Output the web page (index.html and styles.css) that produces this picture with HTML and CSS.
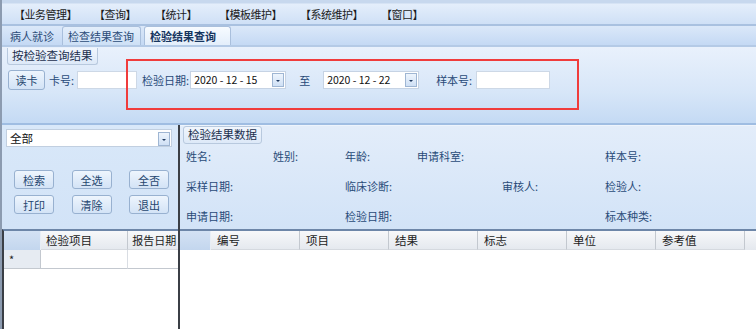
FILE: index.html
```html
<!DOCTYPE html>
<html>
  <head>
    <meta charset="utf-8" />
    <title>检验结果查询</title>
    <link rel="stylesheet" href="styles.css">
  </head>
  <body>
    <div class="window">
      <div class="menubar">
        <span class="menu m1">【业务管理】</span>
        <span class="menu m2">【查询】</span>
        <span class="menu m3">【统计】</span>
        <span class="menu m4">【模板维护】</span>
        <span class="menu m5">【系统维护】</span>
        <span class="menu m6">【窗口】</span>
      </div>

      <div class="tabbar">
        <span class="tab t1">病人就诊</span>
        <span class="tab t2">检查结果查询</span>
        <span class="tab active">检验结果查询</span>
      </div>

      <div class="search">
        <div class="group-title">按检验查询结果</div>
        <div class="search-row">
          <button class="btn btn-read">读卡</button>
          <span class="lbl lbl-card">卡号:</span>
          <span class="input in-card"></span>
          <span class="lbl lbl-date">检验日期:</span>
          <span class="date">2020 - 12 - 15<i class="drop"></i></span>
          <span class="lbl lbl-to">至</span>
          <span class="date">2020 - 12 - 22<i class="drop"></i></span>
          <span class="lbl lbl-sample">样本号:</span>
          <span class="input in-sample"></span>
        </div>
        <div class="mark"></div>
      </div>

      <div class="lower">
        <div class="left">
          <div class="left-tools">
            <div class="combo">全部<i class="drop"></i></div>
            <div class="btn-grid">
              <button class="btn">检索</button>
              <button class="btn">全选</button>
              <button class="btn">全否</button>
              <button class="btn">打印</button>
              <button class="btn">清除</button>
              <button class="btn">退出</button>
            </div>
          </div>
          <div class="grid grid-left">
            <div class="grid-head">
              <span class="rowhead"></span>
              <span class="col c-item">检验项目</span>
              <span class="col c-date">报告日期</span>
            </div>
            <div class="grid-row">
              <span class="rowhead star">*</span>
              <span class="cell c-item"></span>
              <span class="cell c-date"></span>
            </div>
          </div>
        </div>

        <div class="right">
          <div class="data">
            <div class="group-title data-title">检验结果数据</div>
            <div class="fields">
              <span>姓名:</span><span>姓别:</span><span>年龄:</span><span>申请科室:</span><span></span><span>样本号:</span>
              <span>采样日期:</span><span></span><span>临床诊断:</span><span></span><span>审核人:</span><span>检验人:</span>
              <span>申请日期:</span><span></span><span>检验日期:</span><span></span><span></span><span>标本种类:</span>
            </div>
          </div>
          <div class="grid grid-right">
            <div class="grid-head">
              <span class="rowhead"></span>
              <span class="col">编号</span>
              <span class="col">项目</span>
              <span class="col">结果</span>
              <span class="col">标志</span>
              <span class="col">单位</span>
              <span class="col">参考值</span>
            </div>
          </div>
        </div>
      </div>
    </div>
  </body>
</html>
```

FILE: styles.css
```css
* {
  box-sizing: border-box;
}

body {
  margin: 0;
  width: 756px;
  height: 329px;
  overflow: hidden;
  font-family: "Noto Sans CJK SC", "Liberation Sans", sans-serif;
  font-size: 11px;
  color: #1f3d68;
  background: #c9dcf3;
}

.window {
  position: relative;
  height: 329px;
  border-left: 2px solid #8c9bb0;
  display: flex;
  flex-direction: column;
}

/* menu */
.menubar {
  height: 26px;
  display: flex;
  align-items: center;
  padding-top: 4px;
  background: linear-gradient(#c7d8ee 0, #c7d8ee 3px, #e4eefb 4px, #cfe0f6 100%);
  border-bottom: 2px solid #a9c1e0;
  color: #1b1b1b;
}

.menu {
  letter-spacing: -0.5px;
}

.m1 { margin-left: 12px; }
.m2 { margin-left: 17px; }
.m3 { margin-left: 19px; }
.m4 { margin-left: 22px; }
.m5 { margin-left: 18px; }
.m6 { margin-left: 18px; }

/* tabs */
.tabbar {
  height: 21px;
  display: flex;
  align-items: flex-end;
  padding-left: 2px;
  background: linear-gradient(#dbe8f9, #c4d9f4);
  border-bottom: 2px solid #b4cae6;
}

.tab {
  height: 19px;
  line-height: 18px;
  padding: 0 6px 0 5px;
  color: #2c4c78;
  border: 1px solid #a9bfdc;
  border-bottom: none;
  border-radius: 3px 3px 0 0;
  background: linear-gradient(#e3eefb, #cde0f6);
  margin-right: 1px;
}

.t1 {
  border-color: transparent;
  background: none;
}

.tab.active {
  font-weight: bold;
  color: #16355f;
  background: linear-gradient(#f7fbff, #e3eefb);
  padding-right: 14px;
  margin-left: 2px;
}

/* search panel */
.search {
  position: relative;
  height: 78px;
  background: linear-gradient(#e9f1fc, #d7e6f8 60%, #c4daf4);
  border-bottom: 2px solid #9fbde2;
  padding-left: 5px;
}

.group-title {
  display: inline-block;
  height: 17px;
  line-height: 15px;
  padding: 0 4px;
  color: #1b2f4d;
  border: 1px solid #b8c9de;
  border-top: none;
  background: linear-gradient(#f1f6fd, #dde9f8);
  border-radius: 0 0 3px 3px;
  font-size: 11.5px;
}

.search-row {
  display: flex;
  align-items: center;
  margin-top: 5px;
  height: 20px;
}

.btn {
  font-family: inherit;
  font-size: 11px;
  color: #25466f;
  height: 19px;
  width: 40px;
  padding: 0;
  border: 1px solid #98b1d0;
  border-radius: 3px;
  background: linear-gradient(#eef5fd, #d3e3f6);
}

.btn-read {
  width: 37px;
  height: 20px;
  margin-left: 1px;
}

.lbl {
  color: #284a78;
  white-space: nowrap;
}

.lbl-card { margin-left: 4px; }
.lbl-date { margin-left: 5px; }
.lbl-to { margin-left: 13px; margin-right: 12px; }
.lbl-sample { margin-left: 17px; }

.input {
  height: 18px;
  background: #fff;
  border: 1px solid #cdd8e6;
}

.in-card {
  width: 60px;
  margin-left: 3px;
}

.in-sample {
  width: 74px;
  margin-left: 4px;
}

.date {
  position: relative;
  width: 96px;
  height: 18px;
  line-height: 16px;
  margin-left: 1px;
  padding-left: 3px;
  background: #fff;
  border: 1px solid #c6d3e4;
  color: #111;
  font-size: 10.5px;
  white-space: pre;
}

.drop {
  position: absolute;
  right: 1px;
  top: 1px;
  width: 12px;
  height: 14px;
  border: 1px solid #9fb6d3;
  background: linear-gradient(#eef5fd, #cfe0f5);
}

.drop::after {
  content: "";
  position: absolute;
  left: 3px;
  top: 6px;
  border-left: 2px solid transparent;
  border-right: 2px solid transparent;
  border-top: 2px solid #203a60;
}

/* red annotation */
.mark {
  position: absolute;
  left: 124px;
  top: 12px;
  width: 453px;
  height: 51px;
  border: 2px solid #f03c3c;
}

/* lower area */
.lower {
  flex: 1;
  display: flex;
}

.left {
  width: 176px;
  display: flex;
  flex-direction: column;
  background: linear-gradient(#d9e8f9, #cbdef5);
}

.left-tools {
  height: 104px;
  padding: 4px 6px 0 4px;
}

.combo {
  position: relative;
  height: 18px;
  line-height: 17px;
  padding-left: 3px;
  background: #fff;
  border: 1px solid #c1cfe0;
  color: #111;
  font-size: 11.5px;
}

.combo .drop {
  top: 2px;
  right: 1px;
}

.btn-grid {
  display: grid;
  grid-template-columns: 40px 40px 40px;
  justify-content: space-between;
  row-gap: 6px;
  margin: 23px 3px 0 8px;
}

.right {
  flex: 1;
  display: flex;
  flex-direction: column;
  border-left: 2px solid #3b3f46;
}

.data {
  height: 104px;
  padding-left: 3px;
  background: linear-gradient(#e3edfa, #d2e3f7);
  border-top: 1px solid #eef4fc;
}

.data-title {
  height: 18px;
  border-top: 1px solid #b8c9de;
  border-radius: 3px;
}

.fields {
  display: grid;
  grid-template-columns: 87px 72px 72px 85px 103px 1fr;
  grid-auto-rows: 30px;
  margin-top: 4px;
  padding-left: 3px;
  color: #294b78;
  font-size: 11px;
}

/* grids */
.grid {
  flex: 1;
  background: #fff;
  border-top: 2px solid #6d86a8;
}

.grid-left {
  border-left: 2px solid #3b3f46;
}

.grid-head,
.grid-row {
  display: flex;
  height: 19px;
}

.grid-head {
  background: linear-gradient(#f7f8fa, #e4e8ee);
  color: #1c1c1c;
  font-size: 11.5px;
}

.col {
  width: 89px;
  line-height: 19px;
  padding-left: 6px;
  border-right: 1px solid #c3c8cf;
  border-bottom: 1px solid #d5d9df;
  white-space: nowrap;
  overflow: hidden;
}

.rowhead {
  width: 37px;
  flex-shrink: 0;
  background: linear-gradient(#d4e2f4, #c3d6ee);
  border-right: 1px solid #e8eef6;
}

.grid-row .rowhead {
  background: #e6ebf2;
  border-right: 1px solid #c3c8cf;
  border-bottom: 1px solid #c3c8cf;
}

.star {
  line-height: 19px;
  padding-left: 5px;
  color: #222;
}

.grid-left .c-item {
  width: 88px;
  padding-left: 5px;
}

.grid-left .c-date {
  width: 50px;
  padding-left: 4px;
  border-right: none;
  font-size: 11px;
}

.cell {
  border-right: 1px solid #d9dde3;
  border-bottom: 1px solid #c3c8cf;
}

.grid-right .rowhead {
  width: 31px;
}

.grid-right .col:first-of-type {
  width: 91px;
}
```
